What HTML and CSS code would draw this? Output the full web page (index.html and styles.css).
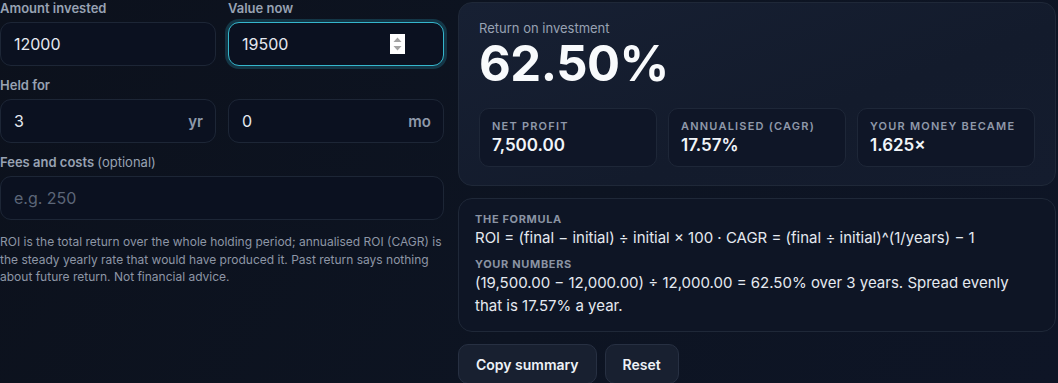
FILE: index.html
```html
<!DOCTYPE html>
<html lang="en">
<head>
    <meta charset="UTF-8">
    <meta name="viewport" content="width=device-width, initial-scale=1.0">
    <title>ROI Calculator</title>
    <link rel="stylesheet" href="styles.css">
</head>
<body>
    <div class="calc">
        <div class="inputs">
            <div class="row">
                <div class="field">
                    <label for="invested">Amount invested</label>
                    <div class="box">
                        <input type="number" id="invested" value="12000">
                    </div>
                </div>
                <div class="field">
                    <label for="current">Value now</label>
                    <div class="box focused">
                        <input type="number" id="current" value="19500">
                        <span class="spinner">
                            <svg width="15" height="20" viewBox="0 0 15 20">
                                <rect width="15" height="20" fill="#ffffff"/>
                                <path d="M3.5 8 L7.5 3.5 L11.5 8 Z" fill="#a3a3a3"/>
                                <path d="M3.5 12 L7.5 16.5 L11.5 12 Z" fill="#a3a3a3"/>
                            </svg>
                        </span>
                    </div>
                </div>
            </div>

            <div class="field">
                <label for="years">Held for</label>
                <div class="row">
                    <div class="box">
                        <input type="number" id="years" value="3">
                        <span class="unit">yr</span>
                    </div>
                    <div class="box">
                        <input type="number" id="months" value="0">
                        <span class="unit">mo</span>
                    </div>
                </div>
            </div>

            <div class="field">
                <label for="fees">Fees and costs <span class="optional">(optional)</span></label>
                <div class="box">
                    <input type="number" id="fees" placeholder="e.g. 250">
                </div>
            </div>

            <p class="note">ROI is the total return over the whole holding period; annualised ROI (CAGR) is the steady yearly rate that would have produced it. Past return says nothing about future return. Not financial advice.</p>
        </div>

        <div class="results">
            <div class="card result">
                <div class="result-label">Return on investment</div>
                <div class="result-value">62.50%</div>
                <div class="stats">
                    <div class="stat">
                        <div class="stat-label">Net profit</div>
                        <div class="stat-value">7,500.00</div>
                    </div>
                    <div class="stat">
                        <div class="stat-label">Annualised (CAGR)</div>
                        <div class="stat-value">17.57%</div>
                    </div>
                    <div class="stat">
                        <div class="stat-label">Your money became</div>
                        <div class="stat-value">1.625×</div>
                    </div>
                </div>
            </div>

            <div class="card formula">
                <div class="formula-label">The formula</div>
                <div class="formula-text">ROI = (final − initial) ÷ initial × 100 · CAGR = (final ÷ initial)^(1/years) − 1</div>
                <div class="formula-label">Your numbers</div>
                <div class="formula-text">(19,500.00 − 12,000.00) ÷ 12,000.00 = 62.50% over 3 years. Spread evenly that is 17.57% a year.</div>
            </div>

            <div class="actions">
                <button class="btn">Copy summary</button>
                <button class="btn">Reset</button>
            </div>
        </div>
    </div>
</body>
</html>
```

FILE: styles.css
```css
body, html {
    margin: 0;
    height: 100%;
    font-family: 'Inter', 'Liberation Sans', Arial, sans-serif;
    background: linear-gradient(120deg, #0c111c 0%, #0d1422 55%, #0e1526 100%);
    color: #e5e9f0;
    overflow: hidden;
}

.calc {
    display: grid;
    grid-template-columns: 444px 1fr;
    gap: 14px;
    padding-right: 2px;
}

/* left side */
.inputs {
    display: flex;
    flex-direction: column;
    gap: 11px;
    min-width: 0;
}

.row {
    display: grid;
    grid-template-columns: minmax(0, 1fr) minmax(0, 1fr);
    gap: 12px;
}

.field {
    display: flex;
    flex-direction: column;
    gap: 5px;
    min-width: 0;
}

.field label {
    font-size: 13px;
    line-height: 17px;
    font-weight: 600;
    color: #98a2b3;
}

.field .optional {
    font-weight: 400;
}

.box {
    display: flex;
    align-items: center;
    min-width: 0;
    height: 42px;
    background-color: #0b1120;
    border: 1px solid #1d2636;
    border-radius: 11px;
    padding: 0 12px 0 13px;
}

.box.focused {
    border-color: #35b6cc;
    box-shadow: 0 0 0 3px rgba(45, 180, 210, 0.22);
    padding-right: 38px;
}

.box input {
    flex: 1;
    width: 100%;
    min-width: 0;
    background: none;
    border: none;
    outline: none;
    color: #e5e9f0;
    font-family: inherit;
    font-size: 16px;
    padding: 0;
    -moz-appearance: textfield;
}

.box input::-webkit-inner-spin-button,
.box input::-webkit-outer-spin-button {
    -webkit-appearance: none;
    margin: 0;
}

.box input::placeholder {
    color: #5c6678;
}

.spinner {
    display: flex;
    margin-left: 4px;
}

.unit {
    font-size: 15px;
    font-weight: 600;
    color: #8f99aa;
}

.note {
    margin: 2px 0 0;
    font-size: 12px;
    line-height: 17.5px;
    color: #8d96a6;
}

/* right side */
.results {
    display: flex;
    flex-direction: column;
    padding-top: 2px;
    min-width: 0;
}

.card {
    border: 1px solid #1f2838;
    border-radius: 14px;
}

.result {
    background: linear-gradient(160deg, #172033 0%, #131b2c 60%, #141c2e 100%);
    padding: 17px 20px 18px;
}

.result-label {
    font-size: 13px;
    line-height: 16px;
    color: #98a2b3;
}

.result-value {
    font-size: 49px;
    line-height: 56px;
    font-weight: 700;
    color: #f8fafc;
    letter-spacing: -0.5px;
    margin-bottom: 16px;
}

.stats {
    display: grid;
    grid-template-columns: repeat(3, 1fr);
    gap: 11px;
}

.stat {
    background-color: #0f1627;
    border: 1px solid #1e2738;
    border-radius: 10px;
    padding: 10px 12px 10px;
}

.stat-label {
    font-size: 11px;
    line-height: 15px;
    font-weight: 600;
    letter-spacing: 0.11em;
    text-transform: uppercase;
    color: #8f99aa;
}

.stat-value {
    font-size: 17px;
    line-height: 22px;
    font-weight: 600;
    color: #f1f5f9;
}

.formula {
    margin-top: 12px;
    background-color: #0e1525;
    padding: 13px 16px 14px;
}

.formula-label {
    font-size: 11px;
    line-height: 14px;
    font-weight: 700;
    letter-spacing: 0.06em;
    text-transform: uppercase;
    color: #8a93a3;
    margin-top: 8px;
}

.formula-label:first-child {
    margin-top: 0;
}

.formula-text {
    font-size: 15px;
    line-height: 23px;
    color: #e5e9f0;
}

.actions {
    display: flex;
    gap: 8px;
    margin-top: 12px;
}

.btn {
    height: 40px;
    padding: 0 17px;
    background-color: #182030;
    border: 1px solid #273042;
    border-radius: 10px;
    color: #eef2f7;
    font-family: inherit;
    font-size: 14px;
    font-weight: 600;
    cursor: pointer;
}
```
